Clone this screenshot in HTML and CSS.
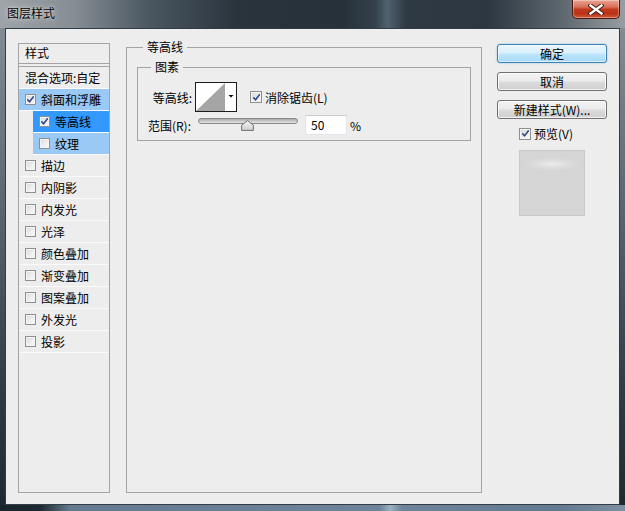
FILE: index.html
```html
<!DOCTYPE html>
<html lang="zh-CN">
<head>
<meta charset="utf-8">
<title>图层样式</title>
<link rel="stylesheet" href="styles.css">
</head>
<body>
<div class="window">
  <div class="titlebar">
    <span class="title">图层样式</span>
    <button class="close" aria-label="关闭">
      <svg width="16" height="11" viewBox="0 0 16 11"><path d="M2.5 1.5 L13.5 9.5 M13.5 1.5 L2.5 9.5" stroke="#3a1a14" stroke-width="4.2" stroke-linecap="square"/><path d="M2.5 1.5 L13.5 9.5 M13.5 1.5 L2.5 9.5" stroke="#ffffff" stroke-width="2.4" stroke-linecap="square"/></svg>
    </button>
  </div>
  <div class="client">
    <div class="styles">
      <div class="st-head">样式</div>
      <ul class="st-list">
        <li class="st-row plain">混合选项:自定</li>
        <li class="st-row soft"><span class="cb checked"></span>斜面和浮雕</li>
        <li class="st-row sub strong"><span class="cb checked"></span>等高线</li>
        <li class="st-row sub soft"><span class="cb"></span>纹理</li>
        <li class="st-row"><span class="cb"></span>描边</li>
        <li class="st-row"><span class="cb"></span>内阴影</li>
        <li class="st-row"><span class="cb"></span>内发光</li>
        <li class="st-row"><span class="cb"></span>光泽</li>
        <li class="st-row"><span class="cb"></span>颜色叠加</li>
        <li class="st-row"><span class="cb"></span>渐变叠加</li>
        <li class="st-row"><span class="cb"></span>图案叠加</li>
        <li class="st-row"><span class="cb"></span>外发光</li>
        <li class="st-row"><span class="cb"></span>投影</li>
      </ul>
    </div>

    <fieldset class="group outer">
      <legend>等高线</legend>
      <fieldset class="group inner">
        <legend>图素</legend>
        <div class="frow first">
          <span class="flabel">等高线:</span>
          <div class="contour">
            <svg width="40" height="28" viewBox="0 0 40 28"><rect width="40" height="28" fill="#fff"/><polygon points="0,28 29,0 29,28" fill="#a5a5a5"/><polygon points="32.5,12 37.5,12 35,14.6" fill="#000"/></svg>
          </div>
          <label class="check aa"><span class="cb checked"></span>消除锯齿(L)</label>
        </div>
        <div class="frow second">
          <span class="flabel">范围(R):</span>
          <div class="slider">
            <div class="track"></div>
            <svg class="thumb" width="13" height="11" viewBox="0 0 13 11"><defs><linearGradient id="tg" x1="0" y1="0" x2="0" y2="1"><stop offset="0" stop-color="#f6f6f6"/><stop offset="1" stop-color="#cdcdcd"/></linearGradient></defs><polygon points="6.5,0.6 12.4,5.2 12.4,10.4 0.6,10.4 0.6,5.2" fill="url(#tg)" stroke="#6f6f6f" stroke-width="1"/></svg>
          </div>
          <div class="num">50</div>
          <span class="pct">%</span>
        </div>
      </fieldset>
    </fieldset>

    <div class="actions">
      <button class="btn default">确定</button>
      <button class="btn">取消</button>
      <button class="btn">新建样式(W)...</button>
      <label class="check preview"><span class="cb checked"></span>预览(V)</label>
      <div class="swatch"></div>
    </div>
  </div>
</div>
</body>
</html>
```
FILE: styles.css
```css
* { box-sizing: border-box; }
html, body { margin: 0; padding: 0; }
body {
  width: 625px;
  height: 511px;
  overflow: hidden;
  font-family: "Noto Sans CJK SC", "Noto Sans", "Liberation Sans", sans-serif;
  font-size: 12px;
  color: #000;
  background: #2b3640;
}
.window {
  width: 625px;
  height: 511px;
  display: flex;
  flex-direction: column;
  background:
    linear-gradient(90deg, #1b242b 0, #1e2830 40px, #667b90 70px, #6f8499 380px, #9db0c1 390px, #6f8499 402px, #647a8f 560px, #7e8fa0 100%) bottom / 100% 6px no-repeat,
    linear-gradient(180deg, #8b9298 0%, #5a6670 40%, #2c3840 80%, #1e282f 100%);
}
.titlebar {
  height: 28px;
  display: flex;
  align-items: flex-start;
  background: linear-gradient(90deg, #9ea4a9 0%, #858d93 12%, #4a5660 24%, #2a343d 38%, #27313a 55%, #34414c 60%, #50616f 62%, #2e3943 65%, #2c3741 78%, #5f686f 90%, #979da2 100%);
}
.title {
  padding: 4px 0 0 7px;
  line-height: 17px;
  color: #000;
  text-shadow: 0 0 6px rgba(255,255,255,0.7), 0 0 2px rgba(255,255,255,0.6);
}
.close {
  margin-left: auto;
  margin-right: 5px;
  width: 48px;
  height: 19px;
  padding: 0;
  border: 1px solid #4a1810;
  border-top: none;
  border-radius: 0 0 5px 5px;
  background: linear-gradient(180deg, #e9a595 0%, #d86d55 40%, #c23a1e 52%, #b93218 75%, #cf5a3a 100%);
  box-shadow: inset 0 0 0 1px rgba(255,255,255,0.35);
  display: flex;
  align-items: center;
  justify-content: center;
}
.client {
  flex: 1;
  margin: 0 5px 6px 5px;
  border: 1px solid #333d46;
  background: #ededed;
  display: flex;
  align-items: flex-start;
  padding-left: 12px;
}

/* left styles list */
.styles {
  margin-top: 14px;
  width: 92px;
  height: 450px;
  border: 1px solid #a3a3a3;
}
.st-head {
  height: 20px;
  line-height: 18px;
  padding-left: 6px;
  border-bottom: 1px solid #a3a3a3;
}
.st-list {
  list-style: none;
  margin: 2px 0 0 0;
  padding: 0;
  border-top: 1px solid #a3a3a3;
}
.st-row {
  height: 22px;
  line-height: 21px;
  padding-left: 6px;
  border-bottom: 1px solid #fbfbfb;
  display: flex;
  align-items: center;
  white-space: nowrap;
}
.st-row.sub { margin-left: 14px; }
.st-row.soft { background: #99c9f4; }
.st-row.strong { background: #3399ff; }
.st-row .cb { margin-right: 5px; }

/* checkbox */
.cb {
  display: inline-block;
  flex: none;
  width: 11px;
  height: 11px;
  border: 1px solid #8e8f8f;
  background: linear-gradient(135deg, #d8d8d8 0%, #eeeeee 55%, #fbfbfb 100%);
  box-shadow: inset 0 0 0 1px #f4f4f4;
}
.cb.checked {
  background:
    url("data:image/svg+xml;utf8,<svg xmlns='http://www.w3.org/2000/svg' width='9' height='9' viewBox='0 0 9 9'><path d='M1.3 4.4 L3.6 6.8 L7.8 1.2' fill='none' stroke='%23314c8c' stroke-width='1.6'/></svg>") center / 9px 9px no-repeat,
    linear-gradient(135deg, #d8d8d8 0%, #eeeeee 55%, #fbfbfb 100%);
}

/* group boxes */
.group {
  margin: 0;
  border: 1px solid #a3a3a3;
  min-width: 0;
}
.group legend {
  line-height: 16px;
  padding: 0 4px;
}
.outer {
  margin-top: 10px;
  margin-left: 16px;
  width: 356px;
  height: 454px;
  padding: 4px 10px 0 10px;
}
.outer > legend { margin-left: 6px; }
.inner {
  width: 334px;
  height: 82px;
  padding: 7px 0 4px 0;
}
.inner > legend { margin-left: 13px; }

.frow {
  display: flex;
  align-items: center;
}
.frow.first { height: 30px; }
.frow.second { height: 20px; margin-top: 3px; }
.flabel {
  width: 54px;
  text-align: right;
  white-space: nowrap;
}
.frow.second .flabel { width: 53px; }
.contour {
  margin-left: 3px;
  width: 42px;
  height: 30px;
  border: 1px solid #1c1c1c;
  display: flex;
}
.check {
  display: flex;
  align-items: center;
  white-space: nowrap;
}
.check .cb { margin-right: 3px; width: 12px; height: 12px; }
.aa { margin-left: 13px; }

.slider {
  position: relative;
  margin-left: 7px;
  width: 100px;
  height: 20px;
}
.track {
  margin-top: 3px;
  height: 6px;
  border: 1px solid #8a8a8a;
  border-radius: 3px;
  background: linear-gradient(180deg, #a9a9a9 0%, #cfcfcf 60%, #e2e2e2 100%);
}
.thumb {
  position: absolute;
  left: 43px;
  top: 5px;
}
.num {
  margin-left: 7px;
  width: 42px;
  height: 20px;
  line-height: 18px;
  padding-left: 5px;
  background: #fff;
  border: 1px solid #e2e6ea;
  border-top-color: #c9ccd0;
}
.pct { margin-left: 3px; }

/* right column */
.actions {
  margin-top: 15px;
  margin-left: 15px;
  width: 110px;
  display: flex;
  flex-direction: column;
}
.btn {
  height: 19px;
  padding: 0;
  font: inherit;
  line-height: 17px;
  color: #000;
  border: 1px solid #707070;
  border-radius: 3px;
  background: linear-gradient(180deg, #f3f3f3 0%, #ebebeb 48%, #dcdcdc 52%, #cfcfcf 100%);
  box-shadow: inset 0 0 0 1px rgba(255,255,255,0.75);
  margin-bottom: 9px;
  white-space: nowrap;
}
.btn.default {
  border-color: #3c7fb1;
  background: linear-gradient(180deg, #eaf6fd 0%, #d9f0fc 48%, #bee6fd 52%, #a7d9f5 100%);
  box-shadow: inset 0 0 0 1px rgba(255,255,255,0.6), 0 0 2px rgba(70,170,230,0.6);
}
.preview {
  margin-left: 22px;
  margin-top: -1px;
  height: 13px;
}
.swatch {
  margin-top: 10px;
  margin-left: 22px;
  width: 66px;
  height: 66px;
  border: 1px solid #c9c9c9;
  background:
    radial-gradient(ellipse 28px 7px at 50% 13px, rgba(238,238,238,0.9) 0%, rgba(230,230,230,0.45) 55%, rgba(214,214,214,0) 100%),
    #d5d5d5;
}
```
